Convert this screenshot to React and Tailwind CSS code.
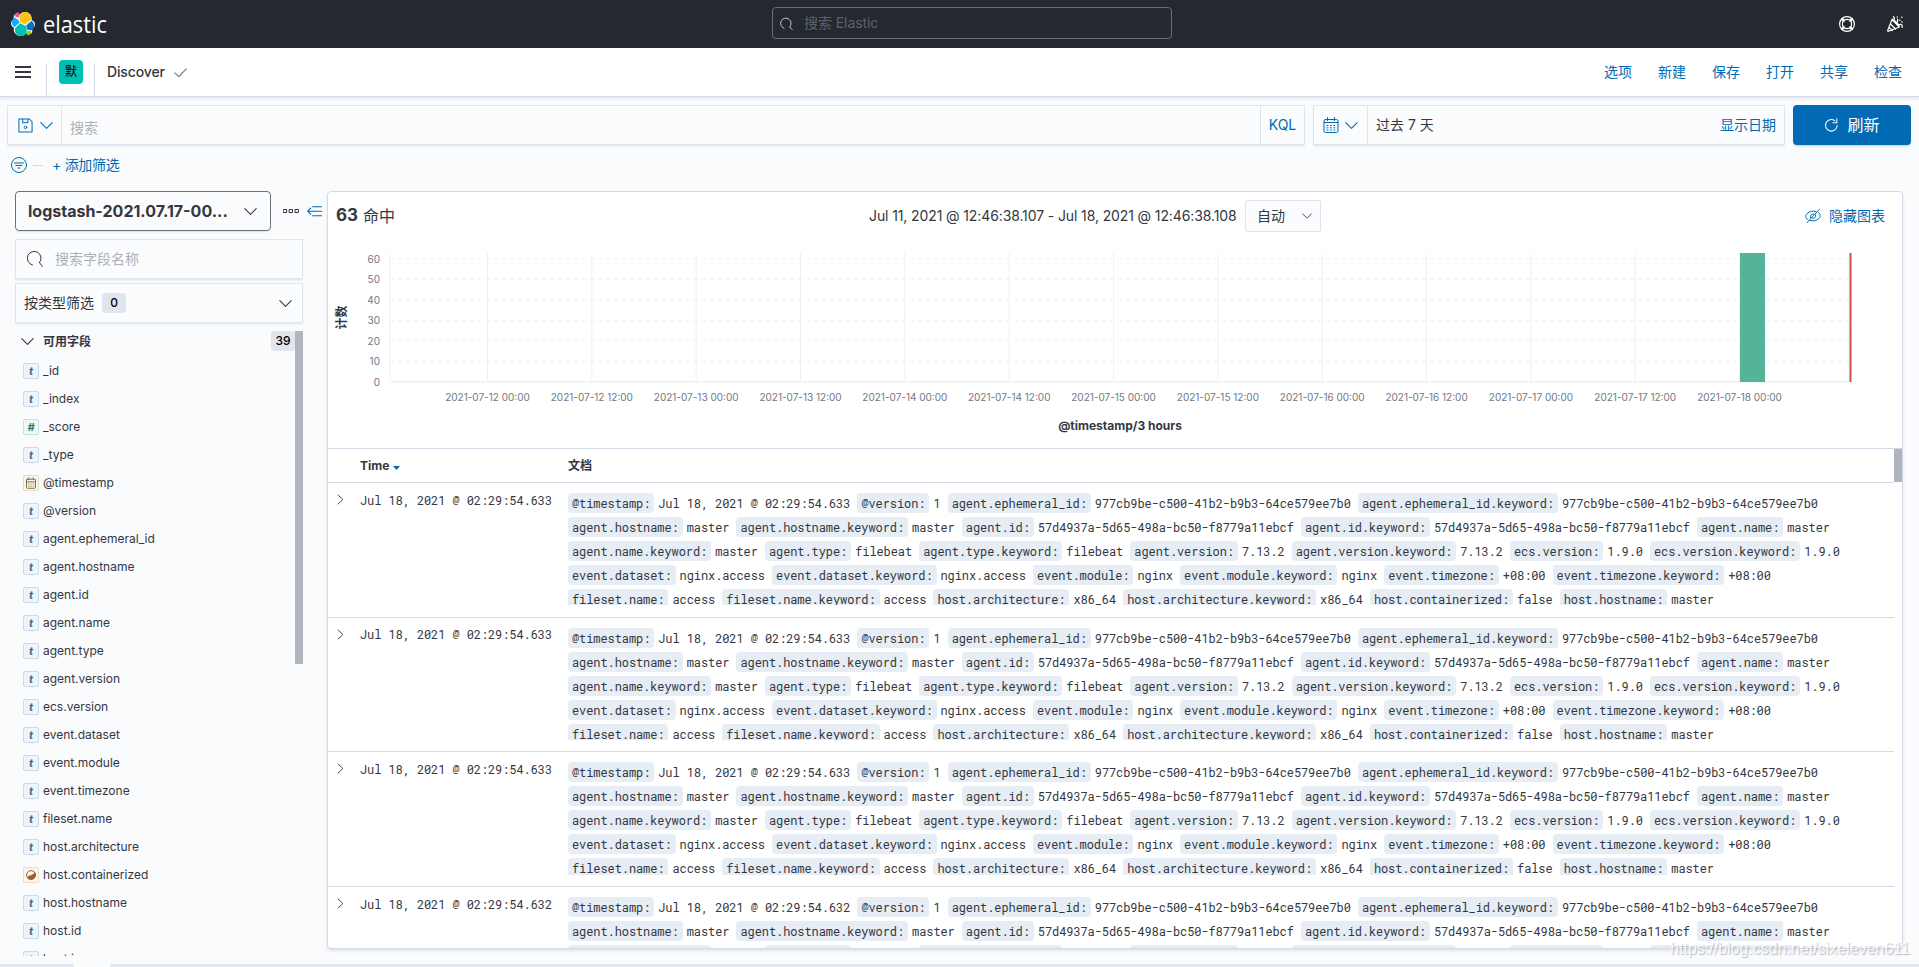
const chips = [
  ["@timestamp", ""],
  ["@version", "1"],
  ["agent.ephemeral_id", "977cb9be-c500-41b2-b9b3-64ce579ee7b0"],
  ["agent.ephemeral_id.keyword", "977cb9be-c500-41b2-b9b3-64ce579ee7b0"],
  ["agent.hostname", "master"],
  ["agent.hostname.keyword", "master"],
  ["agent.id", "57d4937a-5d65-498a-bc50-f8779a11ebcf"],
  ["agent.id.keyword", "57d4937a-5d65-498a-bc50-f8779a11ebcf"],
  ["agent.name", "master"],
  ["agent.name.keyword", "master"],
  ["agent.type", "filebeat"],
  ["agent.type.keyword", "filebeat"],
  ["agent.version", "7.13.2"],
  ["agent.version.keyword", "7.13.2"],
  ["ecs.version", "1.9.0"],
  ["ecs.version.keyword", "1.9.0"],
  ["event.dataset", "nginx.access"],
  ["event.dataset.keyword", "nginx.access"],
  ["event.module", "nginx"],
  ["event.module.keyword", "nginx"],
  ["event.timezone", "+08:00"],
  ["event.timezone.keyword", "+08:00"],
  ["fileset.name", "access"],
  ["fileset.name.keyword", "access"],
  ["host.architecture", "x86_64"],
  ["host.architecture.keyword", "x86_64"],
  ["host.containerized", "false"],
  ["host.hostname", "master"],
];

// documents are broken into fixed lines of this many fields
const lineSizes = [4, 5, 7, 6, 6];

const docs = [
  "Jul 18, 2021 @ 02:29:54.633",
  "Jul 18, 2021 @ 02:29:54.633",
  "Jul 18, 2021 @ 02:29:54.633",
  "Jul 18, 2021 @ 02:29:54.632",
];

const fields = [
  ["_id", "t"],
  ["_index", "t"],
  ["_score", "#"],
  ["_type", "t"],
  ["@timestamp", "date"],
  ["@version", "t"],
  ["agent.ephemeral_id", "t"],
  ["agent.hostname", "t"],
  ["agent.id", "t"],
  ["agent.name", "t"],
  ["agent.type", "t"],
  ["agent.version", "t"],
  ["ecs.version", "t"],
  ["event.dataset", "t"],
  ["event.module", "t"],
  ["event.timezone", "t"],
  ["fileset.name", "t"],
  ["host.architecture", "t"],
  ["host.containerized", "bool"],
  ["host.hostname", "t"],
  ["host.id", "t"],
  ["host.ip", "t"],
];

const ticks = [
  "2021-07-12 00:00",
  "2021-07-12 12:00",
  "2021-07-13 00:00",
  "2021-07-13 12:00",
  "2021-07-14 00:00",
  "2021-07-14 12:00",
  "2021-07-15 00:00",
  "2021-07-15 12:00",
  "2021-07-16 00:00",
  "2021-07-16 12:00",
  "2021-07-17 00:00",
  "2021-07-17 12:00",
  "2021-07-18 00:00",
];

const menu = ["选项", "新建", "保存", "打开", "共享", "检查"];

function Icon({ size = 16, className = "", children }) {
  return (
    <svg width={size} height={size} viewBox="0 0 16 16" fill="none" stroke="currentColor" strokeLinecap="round" strokeLinejoin="round" className={`shrink-0 ${className}`}>
      {children}
    </svg>
  );
}

function Chevron({ size = 13, className }) {
  return (
    <Icon size={size} className={className}>
      <path d="m1 4.500 7 7 7-7" strokeWidth="1.350" />
    </Icon>
  );
}

function CalendarIcon() {
  return (
    <Icon>
      <rect x="1" y="2.500" width="14" height="13" rx="1.500" />
      <path d="M1 5.500h14M4.500 .6v3M11.500 .6v3" />
      <path d="M4 8.500h8M4 10.800h8M4 13h8" strokeDasharray="1 2.400" />
    </Icon>
  );
}

function ElasticLogo() {
  return (
    <svg width="24" height="24" viewBox="0 0 24 24" className="shrink-0">
      <g fill="#fff">
        <circle cx="14" cy="6.800" r="6.800" />
        <circle cx="9.500" cy="17.200" r="6.800" />
        <circle cx="6" cy="5.200" r="3.300" />
        <circle cx="4.200" cy="11.500" r="4.200" />
        <circle cx="19.800" cy="12.500" r="4.200" />
        <circle cx="18" cy="18.800" r="3.300" />
        <path d="M5 5h13v14H6z" />
      </g>
      <path fill="#FEC514" d="m9.300 10.300 5.200 2.400 5.300-4.600A6 6 0 1 0 8.200 6z" />
      <path fill="#00BFB3" d="M4.300 15.900a6 6 0 1 0 11.600 2.100l-1.100-4-5.700-2.700z" />
      <path fill="#F04E98" d="m4.200 4.600 3.600.9.800-4A2.700 2.700 0 0 0 4.200 4.600z" />
      <path fill="#1BA9F5" d="M3.900 5.500C-.4 7.100-.2 13.200 3.700 15l5-4.500-.9-2z" />
      <path fill="#93C90E" d="m15.500 22.400.8-4 3.500.9a2.700 2.700 0 0 1-4.300 3.100z" />
      <path fill="#0077CC" d="m16.200 17.600 3.900.9c4.300-1.700 4-7.700.2-9.500l-5.100 4.400z" />
    </svg>
  );
}

function Header() {
  return (
    <header className="flex h-12 items-center justify-between bg-[#25282f] pr-4 pl-[11px] text-white">
      <div className="flex w-[761px] items-center">
        <ElasticLogo />
        <svg width="70" height="40" className="ml-2">
          <text x="0" y="28.500" fill="#fff" fontSize="23" textLength="64" lengthAdjust="spacingAndGlyphs" className="font-['Open_Sans',sans-serif]">elastic</text>
        </svg>
      </div>
      <div className="mr-auto -mt-0.5 flex h-8 w-[400px] items-center gap-[11px] rounded-sm border border-[#6a6d74] bg-[#25282f] pl-[7px] text-sm tracking-[-0.005em] text-[#5e6168]">
        <Icon size={13} className="text-[#c5c7cb]">
          <path d="M5 14A6.500 6.500 0 1 1 12 12.300M12 12.300l3 3.200" strokeWidth="1.200" />
        </Icon>
        <span>搜索 Elastic</span>
      </div>
      <div className="flex items-center gap-8">
        <Icon>
          <circle cx="8" cy="8" r="7.400" strokeWidth="1.200" />
          <circle cx="8" cy="8" r="4.600" strokeWidth="1.200" />
          <path d="m3.200 3.200 1.400 1.400M12.800 3.200l-1.400 1.400M3.200 12.800l1.400-1.400M12.800 12.800l-1.400-1.400" strokeWidth="2.600" />
        </Icon>
        <Icon>
          <path d="M5 3.500.7 14.500c-.2.6.2.9.8.8L12.300 11zM3.500 8l5 5M2.300 11.500l3 3M5 3.500c1.200-.7 7.800 5.500 7.300 7.500M7 3.500c.8-1 .3-2-.6-2.800M9.500 7c1-1 1.500-2.200 1-4M12.300 8.800c1.200-.9 2.600-.5 2.900 1.200v1.500" strokeWidth="1.200" />
          <path d="M10.200 .9h.1M14.800 1.300h.1M12.800 4.200h.1M15 6h.1" strokeWidth="1.400" />
        </Icon>
      </div>
    </header>
  );
}

function NavBar() {
  return (
    <nav className="flex h-[49px] items-center border-b border-[#d3dae6] bg-white pr-[17px] pl-[15px] text-sm shadow-[0_2px_3px_rgba(152,162,179,0.2)]">
      <svg width="16" height="12" className="shrink-0" fill="#343741">
        <path d="M0 0h16v2H0zM0 5h16v2H0zM0 10h16v2H0z" />
      </svg>
      <span className="ml-[15px] h-8 w-px self-end bg-[#d3dae6]" />
      <span className="ml-3 flex h-6 w-6 items-center justify-center rounded bg-[#00bfb3] text-xs text-black">默</span>
      <span className="ml-[11px] h-8 w-px self-end bg-[#d3dae6]" />
      <span className="ml-3 font-medium tracking-[-0.01em]">Discover</span>
      <Icon size={13} className="ml-[9px] text-[#69707d]">
        <path d="m1 8.500 5 4.500 9-9.500" strokeWidth="1.300" />
      </Icon>
      <div className="ml-auto flex gap-[26px] text-[#006bb4]">
        {menu.map((item) => (
          <span key={item}>{item}</span>
        ))}
      </div>
    </nav>
  );
}

function QueryBar() {
  const box = "flex h-10 border border-[#e0e4ee] bg-[#fbfcfd] shadow-[0_2px_2px_-1px_rgba(152,162,179,0.3)]";
  return (
    <div className="flex gap-2 px-2 pt-2 pl-[7px] text-sm">
      <div className={`${box} w-[1298px]`}>
        <div className="flex w-[54px] items-center gap-[7px] border-r border-[#e0e4ee] pl-[10px] text-[#006bb4]">
          <Icon size={15}>
            <path d="M1 1h11l3 3v11H1zM5 1v4h5.500V1" strokeWidth="1.100" />
            <circle cx="8" cy="10" r="1.400" />
          </Icon>
          <Chevron />
        </div>
        <div className="flex-1 pt-3 pl-2 leading-5 text-[#abb0b9]">搜索</div>
        <div className="flex w-11 items-center justify-center border-l border-[#e0e4ee] text-[#006bb4]">KQL</div>
      </div>
      <div className={`${box} w-[472px]`}>
        <div className="flex w-[54px] items-center gap-[6px] border-r border-[#e0e4ee] pl-[9px] text-[#006bb4]">
          <CalendarIcon />
          <Chevron />
        </div>
        <div className="flex flex-1 items-center justify-between px-2">
          <span>过去 7 天</span>
          <span className="text-[#006bb4]">显示日期</span>
        </div>
      </div>
      <button className="flex h-10 w-[118px] items-center justify-center gap-2 rounded bg-[#006bb4] text-base text-white shadow-[0_2px_2px_-1px_rgba(54,97,126,0.3)]">
        <Icon size={15}>
          <path d="M14 8A6.200 6.200 0 1 1 11.500 2.800M13.700 .8v4.200H9.500" strokeWidth="1.100" />
        </Icon>
        刷新
      </button>
    </div>
  );
}

function FilterBar() {
  return (
    <div className="flex h-10 items-center pl-[11px] text-sm text-[#006bb4]">
      <Icon>
        <circle cx="8" cy="8" r="7.500" />
        <path d="M3.500 6h9M5 8.500h6M7 11h2" />
      </Icon>
      <span className="ml-[6px] h-px w-[10px] bg-[#d3dae6]" />
      <span className="ml-[9px] tracking-[-0.02em]">+ 添加筛选</span>
    </div>
  );
}

function FieldToken({ type }) {
  const base = "flex h-4 w-4 shrink-0 items-center justify-center rounded-[2px] border text-[11px] leading-none font-bold italic";
  if (type === "#") return <span className={`${base} border-[#bfe3da] bg-[#eef8f5] text-[#387765]`}>#</span>;
  if (type === "date") {
    return (
      <span className={`${base} border-[#e3dcc8] bg-[#f8f6ef] text-[#7b6b43]`}>
        <Icon size={12}>
          <rect x="2" y="3" width="12" height="12" rx="1" strokeWidth="1.300" />
          <path d="M2 6.500h12M5 1v2M11 1v2" strokeWidth="1.300" />
          <path d="M5 9.500h6.500M5 12.300h6.500" strokeWidth="1.300" strokeDasharray=".3 2.700" />
        </Icon>
      </span>
    );
  }
  if (type === "bool") {
    return (
      <span className={`${base} border-[#f5d9bd] bg-[#fdf4ec] text-[#996130]`}>
        <svg width="10" height="10" viewBox="0 0 10 10">
          <circle cx="5" cy="5" r="4.400" fill="none" stroke="currentColor" />
          <path d="M8.400 1.600A4.800 4.800 0 0 1 1.600 8.400c.2-2.100 1-3 3-3.200 2.100-.2 3.600-1.300 3.800-3.600z" fill="currentColor" />
        </svg>
      </span>
    );
  }
  return <span className={`${base} border-[#c8dbea] bg-[#eef4f9] text-[#3f6c8f]`}>t</span>;
}

function Sidebar() {
  const box = "mt-1 flex h-10 w-[288px] items-center border border-[#e0e4ee] bg-[#fbfcfd] text-sm shadow-[0_2px_2px_-1px_rgba(152,162,179,0.3)]";
  return (
    <aside className="flex w-[312px] flex-col">
      <div className="flex items-center">
        <div className="flex h-10 w-64 items-center justify-between rounded border border-[#69707d] pr-[13px] pl-3 text-base font-bold shadow-[0_2px_2px_-1px_rgba(152,162,179,0.3)]">
          <span>logstash-2021.07.17-00...</span>
          <Chevron />
        </div>
        <Icon className="ml-3">
          <path d="M.6 6.500h3v3h-3zM6.500 6.500h3v3h-3zM12.400 6.500h3v3h-3z" strokeLinejoin="miter" />
        </Icon>
        <Icon size={15} className="ml-2 text-[#006bb4]">
          <path d="M6 3h9.500M1 7.700h14.500M6 12.500h9.500M4 4.300.7 7.700 4 11" strokeWidth="1.100" />
        </Icon>
      </div>
      <div className={`${box} mt-2 gap-3 pl-[11px] text-[#abb0b9]`}>
        <Icon className="text-[#343741]">
          <path d="M5.500 14A6.900 6.900 0 1 1 12.500 11.700M12.500 11.700l3 3.700" />
        </Icon>
        <span>搜索字段名称</span>
      </div>
      <div className={`${box} pr-[10px] pl-2`}>
        <span>按类型筛选</span>
        <span className="ml-2 flex h-5 w-6 items-center justify-center rounded-[3px] bg-[#e0e5ee] text-xs font-medium text-black">0</span>
        <Chevron className="ml-auto" />
      </div>
      <div className="mt-2 flex h-[625px] w-[288px] overflow-hidden text-xs">
        <div className="flex-1">
          <div className="flex h-5 items-center pl-[6px]">
            <Chevron />
            <span className="mt-0.5 ml-[9px] font-bold">可用字段</span>
            <span className="ml-auto flex h-5 w-6 items-center justify-center rounded-[3px] bg-[#e0e5ee] font-medium text-black">39</span>
          </div>
          <div className="pt-[6px]">
            {fields.map(([name, type]) => (
              <div key={name} className="flex h-7 items-center gap-1 pl-2">
                <FieldToken type={type} />
                <span>{name}</span>
              </div>
            ))}
          </div>
        </div>
        <div className="h-[333px] w-2 bg-[#b1b4bf]" />
      </div>
    </aside>
  );
}

function Histogram() {
  const x0 = 62;
  const y0 = 137.7;
  const right = 1522;
  return (
    <svg width="1574" height="208" className="mt-1 block shrink-0" fontSize="10" fill="#727885">
      {[0, 10, 20, 30, 40, 50, 60].map((v) => {
        const y = y0 - v * 2.047;
        return (
          <g key={v}>
            <line x1={x0} x2={right} y1={y} y2={y} stroke="#eef0f4" strokeWidth={v ? 1 : 1.5} strokeDasharray={v ? "4 4" : undefined} />
            <text x="52" y={y + 4} textAnchor="end">{v}</text>
          </g>
        );
      })}
      <line x1={x0} x2={x0} y1="9" y2={y0} stroke="#eef0f4" />
      {ticks.map((label, i) => {
        const x = 159.5 + i * 104.34;
        return (
          <g key={label}>
            <line x1={x} x2={x} y1="9" y2={y0} stroke="#eef0f4" />
            <text x={x} y="157" textAnchor="middle">{label}</text>
          </g>
        );
      })}
      <rect x="1412" y="9" width="25" height="129" fill="#54b399" />
      <rect x="1521" y="9" width="3" height="129" fill="#e7a9a5" />
      <rect x="1522" y="9" width="1" height="129" fill="#cc4f48" />
      <g fill="#343741" fontSize="12" fontWeight="700">
        <text x="792" y="185.500" textAnchor="middle">@timestamp/3 hours</text>
        <text transform="translate(18 73.500) rotate(-90)" textAnchor="middle">计数</text>
      </g>
    </svg>
  );
}

function DocRow({ time }) {
  let start = 0;
  const lines = lineSizes.map((size) => {
    const line = chips.slice(start, start + size);
    start += size;
    return line;
  });
  return (
    <div className="flex h-[134.670px] shrink-0 border-b border-[#d3dae6] font-['Roboto_Mono','Liberation_Mono',monospace] text-xs tracking-[-0.09px]">
      <Icon size={11} className="mt-[11px] ml-[7px]">
        <path d="m4.500 1.500 7 6.500-7 6.500" strokeWidth="1.300" />
      </Icon>
      <span className="mt-[6.800px] ml-[14px] w-[208px] leading-5 whitespace-pre">{time}</span>
      <div className="mt-[7.400px] h-[115px] overflow-hidden leading-6 whitespace-pre">
        {lines.map((line) => (
          <div key={line[0][0]} className="flex h-6 items-center pt-[1px]">
            {line.map(([name, value]) => (
              <span key={name} className="flex items-center">
                <span className="mr-1 h-5 rounded bg-[#e6edf5] px-1 leading-5">{name}:</span>
                <span>{`${value || time} `}</span>
              </span>
            ))}
          </div>
        ))}
      </div>
    </div>
  );
}

function Results() {
  return (
    <main className="flex h-[758px] w-[1576px] flex-col overflow-hidden rounded border border-[#d3dae6] bg-white shadow-[0_2px_3px_rgba(152,162,179,0.25)]">
      <div className="flex h-12 shrink-0 items-center pr-[17px] pl-2 text-sm">
        <span className="flex w-[533px] items-center gap-[5px] text-base">
          <b className="text-[17px]">63</b>
          命中
        </span>
        <span className="w-[376px] tracking-[-0.008em]">Jul 11, 2021 @ 12:46:38.107 - Jul 18, 2021 @ 12:46:38.108</span>
        <span className="flex h-8 w-[76px] items-center justify-between rounded-[2px] border border-[#e0e4ee] bg-[#fbfcfd] pr-2 pl-[11px]">
          自动
          <Chevron size={10} />
        </span>
        <span className="ml-auto flex items-center gap-2 text-[#006bb4]">
          <Icon>
            <path d="M3 12C-.2 9.500.3 7.500 2 5.700c2.500-2.500 6-3.200 9-2M13 4.200c3 2.300 2.500 4.500 1 6.200-2.500 2.500-6 3-9 2M2 14.700 14.500 1.200M5.500 9.300C5 7 7 5.500 9 6M10.600 7c.6 2.200-1.300 3.800-3.300 3.200" />
          </Icon>
          隐藏图表
        </span>
      </div>
      <Histogram />
      <div className="mt-[-4px] flex min-h-0 flex-1 border-t border-[#d3dae6]">
        <div className="flex w-[1566px] flex-col">
          <div className="flex h-[34px] shrink-0 items-center border-b border-[#d3dae6] pl-8 text-xs font-bold">
            <span className="flex w-[208px] items-center gap-1">
              Time
              <svg width="7" height="4" className="mt-1"><path d="M0 0h7L3.500 4z" fill="#006bb4" /></svg>
            </span>
            <span>文档</span>
          </div>
          {docs.map((time, i) => (
            <DocRow key={i} time={time} />
          ))}
        </div>
        <div className="h-[33px] w-2 bg-[#b1b4bf]" />
      </div>
    </main>
  );
}

export default function App() {
  return (
    <div className="relative flex h-[967px] w-[1919px] flex-col overflow-hidden bg-[#fafbfd] font-['Inter','Noto_Sans_CJK_SC',sans-serif] text-[#343741]">
      <Header />
      <NavBar />
      <QueryBar />
      <FilterBar />
      <div className="flex pt-[6px] pl-[15px]">
        <Sidebar />
        <Results />
      </div>
      <div className="mt-auto flex h-[3px] bg-[#e3e8f3]">
        <span className="ml-[74px] w-9 bg-[#fafbfd]" />
      </div>
      <div className="absolute right-[9px] bottom-2 font-['Liberation_Sans',sans-serif] text-base leading-5 text-white/80 [text-shadow:1px_1px_1px_rgba(120,125,135,0.5)]">
        https://blog.csdn.net/sixeleven611
      </div>
    </div>
  );
}
